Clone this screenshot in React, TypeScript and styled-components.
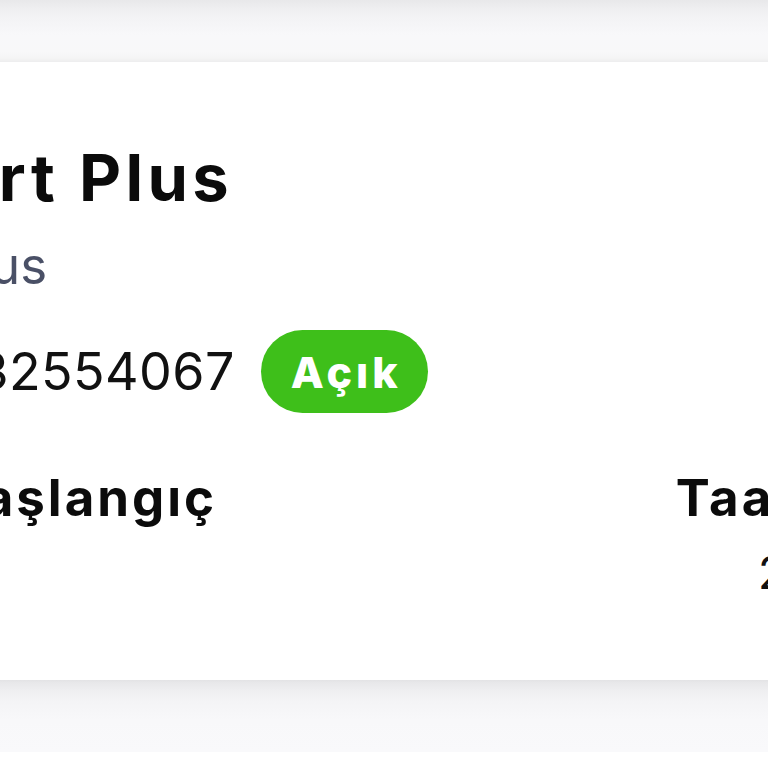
import React from 'react';
import styled, { createGlobalStyle } from 'styled-components';

const Global = createGlobalStyle`
  html, body { margin: 0; padding: 0; background: #ffffff; overflow: hidden; }
  body { font-family: Inter, "Liberation Sans", sans-serif; }
`;

const Screen = styled.div`
  width: 768px;
  height: 768px;
  overflow: hidden;
  display: flex;
  flex-direction: column;
  background: #ffffff;
`;

const ShadeTop = styled.div`
  flex: 0 0 62px;
  background: linear-gradient(
    to bottom,
    #e8e8ea 0px,
    #eeeef0 8px,
    #f3f3f5 18px,
    #f8f8fa 35px,
    #f8f8f9 52px,
    #f5f5f5 58px,
    #ededee 62px
  );
`;

const ShadeBottom = styled.div`
  flex: 0 0 72px;
  background: linear-gradient(
    to bottom,
    #e3e3e5 0px,
    #e8e8ea 3px,
    #eeeef0 10px,
    #f4f4f6 22px,
    #f8f8fa 40px,
    #f9f9fb 72px
  );
`;

const Card = styled.section`
  flex: 0 0 618px;
  box-sizing: border-box;
  width: 1500px;
  margin-left: -194px;
  padding: 76px 40px 0;
  background: #ffffff;
  display: flex;
  flex-direction: column;
  align-items: flex-start;
`;

const Title = styled.h1`
  margin: 0;
  font-size: 65px;
  line-height: 80px;
  font-weight: 700;
  letter-spacing: 4.4px;
  color: #0b0b0b;
`;

const Subtitle = styled.div`
  margin-top: 17px;
  font-size: 51px;
  line-height: 62px;
  font-weight: 400;
  color: #4a5066;
`;

const PhoneRow = styled.div`
  margin-top: 33px;
  height: 83px;
  display: flex;
  align-items: center;
  gap: 26px;
`;

const Phone = styled.span`
  font-size: 52px;
  line-height: 62px;
  font-weight: 400;
  letter-spacing: 0.4px;
  color: #111111;
`;

const Badge = styled.span`
  height: 83px;
  box-sizing: border-box;
  padding: 0 26px 0 30px;
  border-radius: 42px;
  background: #3ebf1a;
  color: #ffffff;
  font-size: 43px;
  font-weight: 800;
  letter-spacing: 4px;
  display: inline-flex;
  align-items: center;
`;

const InfoRow = styled.div`
  margin-top: 54px;
  display: grid;
  grid-template-columns: 472px 400px;
  column-gap: 270px;
`;

const InfoCol = styled.div`
  display: flex;
  flex-direction: column;
  align-items: center;
`;

const InfoLabel = styled.div`
  font-size: 51px;
  line-height: 62px;
  font-weight: 700;
  letter-spacing: 3px;
  color: #0b0b0b;
`;

const InfoValue = styled.div`
  margin-top: 17px;
  min-height: 54px;
  font-size: 45px;
  line-height: 54px;
  font-weight: 400;
  letter-spacing: 2px;
  color: #111111;
`;

const Rest = styled.div`
  flex: 1 1 auto;
  background: #ffffff;
`;

export default function App() {
  return (
    <>
      <Global />
      <Screen>
        <ShadeTop />
        <Card>
          <Title>Smart Plus</Title>
          <Subtitle>Net Plus</Subtitle>
          <PhoneRow>
            <Phone>905332554067</Phone>
            <Badge>Açık</Badge>
          </PhoneRow>
          <InfoRow>
            <InfoCol>
              <InfoLabel>Başlangıç</InfoLabel>
              <InfoValue></InfoValue>
            </InfoCol>
            <InfoCol>
              <InfoLabel>Taahhüt</InfoLabel>
              <InfoValue>24</InfoValue>
            </InfoCol>
          </InfoRow>
        </Card>
        <ShadeBottom />
        <Rest />
      </Screen>
    </>
  );
}
